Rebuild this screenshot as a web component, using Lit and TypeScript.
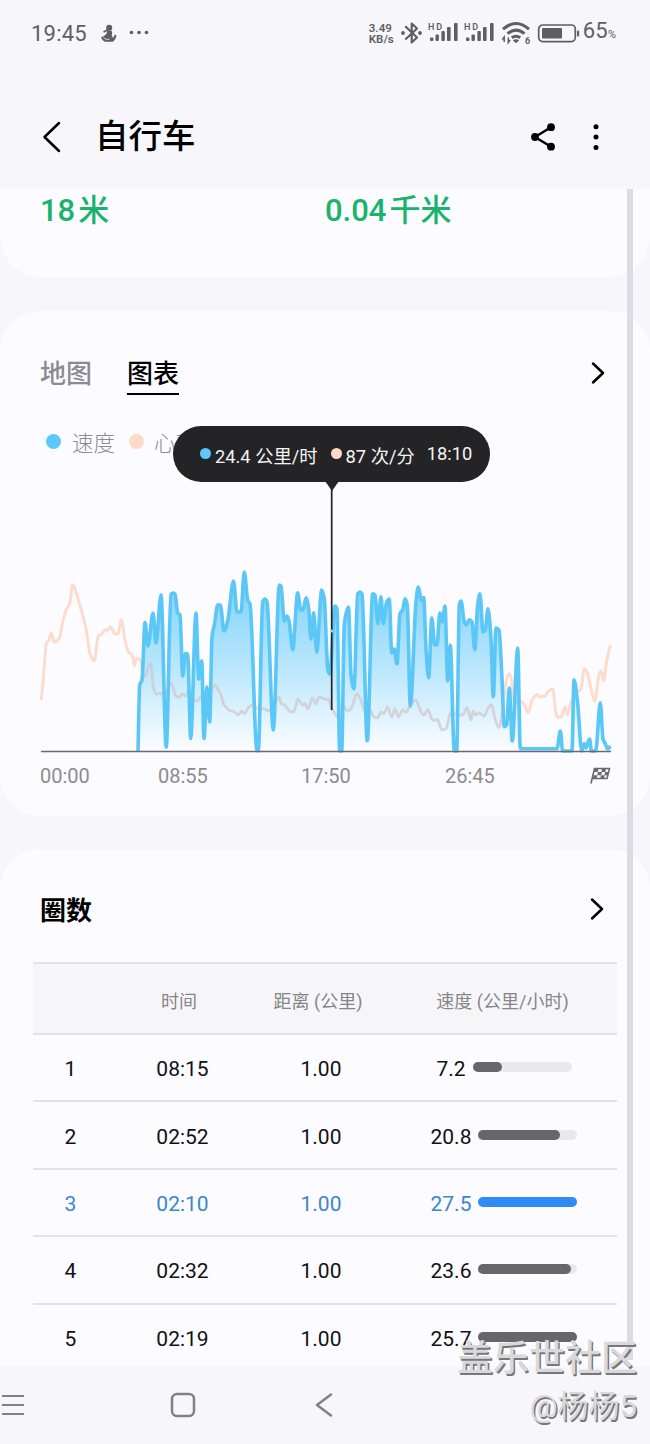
import { LitElement, html, css, svg } from "lit";
import { customElement, property } from "lit/decorators.js";
import { classMap } from "lit/directives/class-map.js";

type Pt = [number, number];

const parse = (s: string): Pt[] =>
  s.trim().split(/\s+/).map((p) => p.split(",").map(Number) as Pt);

const SPEED = parse(`137,749 138.7,683 141,678 144,620.5 147,644 152,611 155,641 160,593 165.2,745 170,592
172,591 174,592 176.7,611 179,613 181.7,674 184.3,651.5 186.7,652 189.7,736.5 195,611 197.7,677 200.7,659 203,736.5
206,685 208.7,720 211,635 213.5,622 216.7,603 219.3,603 223,629 226.7,619 232.5,579 236,610 240,610 243.3,570
246.7,598 249,602 256,748.7 257.3,748.7 261.7,600 264,597 266,600 272.3,728 278.3,583 280,584 283.3,619 286,614
288,619 291.7,647.7 296.7,590.7 299.7,608 302,608 305,595.7 307.7,607 310,637 312.7,610.7 315.7,650 320.7,588
323.3,597 326.7,667 328.7,672 334,604 336,607 338.7,749 340.7,749 343.3,622 347.5,605 350,673 353,687 356.7,592
359,590 361,592 366.3,738.7 371.7,591.7 374,593 377,621.7 380,594.7 382.3,621.7 385.7,600 388.3,597 390.7,651
393.3,647 396,662 399,611.7 401.7,608 404,596.7 406.3,603 409.3,704 415,600 417.3,585 420.3,598 422.7,595.5
425,647 427.7,675.7 430.8,616 433.7,643 436,643 438.9,610.7 441.3,620 444,604 446.7,679 449.3,643 453.3,749
455.7,749 458.3,603 460,599 463.3,620 465.3,623 468.3,617.7 471,620 473.7,647.7 476.7,603 479,591.7 482,630
484.3,628 487,606.7 490,637 492.3,694.7 495,626 498,628 500.7,670 503.3,724.7 505.7,723 508.3,686 511.3,739
516.7,646 519.3,746.7 556,746.7 559.3,729 561.7,749 571,749 573,677.7 576.7,702 580.7,749 583.3,741.7 585,746
586.7,741 588.7,737 590.3,749 594.7,749 599.3,700.7 602,737 604.3,741.7 606.7,747 609.3,744`);

const HEART = parse(`40.3,698 42.3,677 45.3,641.7 48,638 50.3,630.7 53.3,640 58.3,636 61.7,620 65.7,606.7
68.7,602 71.7,583 77.7,599 85,626.7 89.3,653 93.3,659 97.3,634 100.7,632 104,627.7 106.7,628 109.3,625 114.3,632
117.3,631.7 120,617.7 125,643 129,651.7 131,652 133.3,664 135.3,656.7 138.7,657 143.3,675 146.7,667 149.7,661.7
152.3,685 155,692 160,691 162,694 170.3,681.7 175,694 178,695 181.7,692 184,694 188,688 193,698 196.7,699 199,695
205,692 210,688 214,682.7 216.7,687 220,693 223,703 230,709 234,710 237,713 240.7,709 243,711.7 248,705 251.7,703
256.7,706.7 263.3,707 268,709 271.7,705 278.3,695 280,701.7 283.3,703 290,710 293.3,709 296.7,697 301.7,703
304,701.7 306.7,706.7 311.7,696 314.7,701.7 318.3,695 322.7,696.7 328,698 330.7,706.7 333,710 337,715 341.7,703
346.7,709 350.7,705.7 355.7,691.7 360,698 362.7,706.7 365,710 369,708 372.7,715 376.7,715.7 380,710 382.7,711.7
386.7,705 390.7,715 394,706.7 397.3,715 401.7,708 405,710 410,701.7 415,698 420,710 423,713 426.7,707.7 431.7,718
436.7,717.7 440.7,728 445,726.7 450,710 456.7,713 461.7,712.7 466,705.7 470,717.7 472,709 475,713 478,711
483.3,714 486.7,706.7 490.7,702.7 494,716.7 498,725.7 501.7,706.7 506,675 508.3,671.7 510.3,677 513,700 521,700
524,704 527,710.7 531.7,696.7 536.7,692.7 539,695 544,694 546.7,690 551.7,687 555,711.7 557,715.7 560.7,714
564,705 566.7,713 570,700 576.7,690 580,687 583.3,666.7 586,670 590,686.7 593.7,699 598,673 600,669 602.7,679
605,663 609.3,643`);

/** Monotone cubic path, so peaks stay rounded without overshooting. */
function smooth(p: Pt[]): string {
  const n = p.length;
  const d: number[] = [];
  for (let i = 0; i < n - 1; i++) d.push((p[i + 1][1] - p[i][1]) / (p[i + 1][0] - p[i][0]));
  const m: number[] = [d[0]];
  for (let i = 1; i < n - 1; i++) {
    m.push(d[i - 1] * d[i] <= 0 ? 0 : (2 * d[i - 1] * d[i]) / (d[i - 1] + d[i]));
  }
  m.push(d[n - 2]);
  let out = `M${p[0][0]},${p[0][1]}`;
  for (let i = 0; i < n - 1; i++) {
    const h = (p[i + 1][0] - p[i][0]) / 3;
    const c = [p[i][0] + h, p[i][1] + m[i] * h, p[i + 1][0] - h, p[i + 1][1] - m[i + 1] * h];
    out += `C${c.map((v) => v.toFixed(2)).join(",")},${p[i + 1][0]},${p[i + 1][1]}`;
  }
  return out;
}

const base = css`
  :host { display: block; box-sizing: border-box; font-family: Roboto, "Noto Sans CJK SC", sans-serif; }
  * { box-sizing: border-box; }
  svg { display: block; flex: none; }
`;

@customElement("status-bar")
class StatusBar extends LitElement {
  static styles = [base, css`
    :host { height: 66px; padding: 0 34px 0 31px; color: #5f5f63; }
    .bar { display: flex; align-items: center; height: 66px; }
    .time { font-size: 22px; width: 70px; letter-spacing: 0.2px; }
    .grow { flex: 1; }
    .rate { font-size: 11.5px; line-height: 11.5px; font-weight: 600; width: 31px; padding-top: 2px; white-space: nowrap; }
    .pct { font-size: 22px; margin-left: 3px; line-height: 30px; letter-spacing: 0.2px; }
    .pct small { font-size: 11px; letter-spacing: 0; }
    .hd { font: 600 9px Roboto, sans-serif; }
    .six { font: 700 9px Roboto, sans-serif; }
  `];
  signal() {
    return html`<svg width="36" height="24" viewBox="0 0 36 24" fill="#5f5f63">
      <text class="hd" x="0" y="9" textLength="14">HD</text>
      <rect x="2" y="16.5" width="3.4" height="3.5" rx="1"/><rect x="7.5" y="13.5" width="3.4" height="6.5" rx="1"/>
      <rect x="13.4" y="10" width="3.4" height="10" rx="1"/><rect x="19" y="6" width="3.6" height="14" rx="1"/>
      <rect x="26" y="2" width="3.6" height="18" rx="1"/>
    </svg>`;
  }
  render() {
    return html`<div class="bar">
      <span class="time">19:45</span>
      <svg width="16" height="19" viewBox="0 0 16 19" fill="#5f5f63">
        <circle cx="8.2" cy="3.8" r="3"/><path d="M2 7.6 6 5l1.4 1.4L3 8.8z"/>
        <path d="M6 6.5h4.2c1.8 2 .6 3.4.6 4.8.4 1 1 2 1.2 2.6 1-.6 1.2-1.8 1.8-3.4l1.6.8c-.2 3.4-1.8 5.2-3.6 6.4H4C1.600 16.800.2 14.800.2 12.800c1.800.2 2.400-.8 4-1.800C6 9.600 6.200 8 6 6.500z"/>
        <path d="M2.500 13.500c1.500 1.800 4 2.300 6 1.700" fill="none" stroke="#f6f6fb" stroke-width=".8"/>
      </svg>
      <svg width="36" height="10" viewBox="0 0 36 10" fill="#5f5f63">
        <circle cx="14.500" cy="4.500" r="1.800"/><circle cx="22" cy="4.500" r="1.800"/><circle cx="29.500" cy="4.500" r="1.800"/>
      </svg>
      <span class="grow"></span>
      <span class="rate">3.49<br>KB/s</span>
      <svg width="28" height="24" viewBox="0 0 28 24" fill="none" stroke="#5f5f63" stroke-width="2.200" stroke-linejoin="round">
        <path d="M5.300 5.200 17 16.500l-5.300 5V2.500l5.300 5L5.300 18.500"/>
        <circle cx="3" cy="12" r="1" stroke-width="1.800"/><circle cx="20" cy="12" r="1" stroke-width="1.800"/>
      </svg>
      ${this.signal()}${this.signal()}
      <svg width="32" height="24" viewBox="0 0 32 24" fill="none" stroke="#5f5f63" stroke-width="3">
        <path d="M3 8.200Q16 -3.200 29 8.200M7.500 12.700q8.500-7.200 17 0M11.800 16.800q4.200-3 8.400 0"/>
        <path d="M12.800 19.200q3.200-2 6.400 0L16 22.300z" fill="#5f5f63" stroke="none"/>
        <path d="M4.200 21v-5l-2 2.600M8.300 16.500v5l2-2.600" stroke-width="1.500"/>
        <text class="six" x="25" y="22.500" fill="#5f5f63" stroke="none">6</text>
      </svg>
      <svg width="48" height="20" viewBox="0 0 48 20">
        <rect x="6.700" y="2" width="36.600" height="16.600" rx="4" fill="none" stroke="#5f5f63" stroke-width="1.700"/>
        <rect x="10" y="5" width="20" height="10.600" rx="1" fill="#5f5f63"/>
        <rect x="45" y="7.500" width="2.200" height="6" rx="1" fill="#5f5f63"/>
      </svg>
      <span class="pct">65<small>%</small></span>
    </div>`;
  }
}

@customElement("title-bar")
class TitleBar extends LitElement {
  static styles = [base, css`
    :host { height: 123px; }
    .bar { display: flex; align-items: center; height: 141px; padding: 0 47px 0 42px; }
    h1 { flex: 1; margin: 0 0 0 33px; font-size: 33.5px; line-height: 44px; font-weight: 500; color: #000; }
    .more { margin-left: 33px; }
  `];
  render() {
    return html`<div class="bar">
      <svg width="20" height="32" viewBox="0 0 20 32"><path d="M17 2 2.500 16 17 30" fill="none" stroke="#000" stroke-width="2.500" stroke-linecap="round" stroke-linejoin="round"/></svg>
      <h1>自行车</h1>
      <svg width="26" height="30" viewBox="0 0 26 30"><path d="M21 5.200 5 15l16 9.700" fill="none" stroke="#000" stroke-width="2.500"/>
        <circle cx="21" cy="5.200" r="3.900"/><circle cx="5" cy="15" r="3.900"/><circle cx="21" cy="24.700" r="3.900"/></svg>
      <svg class="more" width="14" height="30" viewBox="0 0 14 30"><circle cx="7" cy="4.800" r="2.500"/><circle cx="7" cy="15" r="2.500"/><circle cx="7" cy="25.400" r="2.500"/></svg>
    </div>`;
  }
}

const chevron = html`<svg width="16" height="24" viewBox="0 0 16 24"><path d="M3 2.500 13 12 3 21.500" fill="none" stroke="#000" stroke-width="2.500" stroke-linecap="round" stroke-linejoin="round"/></svg>`;

@customElement("workout-chart")
class WorkoutChart extends LitElement {
  static styles = [base, css`
    :host { position: relative; }
    .legend { display: flex; align-items: center; height: 32px; padding-left: 6px; font-size: 21.5px; color: #8b8b90; font-weight: 300; }
    .dot { width: 15px; height: 15px; border-radius: 50%; margin-right: 11px; flex: none; }
    .dot.heart { margin-left: 14px; margin-right: 10px; }
    .speed { background: #5ac8fa; }
    .heart { background: #fdd9c8; }
    .plot { margin-top: 24px; }
    .axis { display: grid; grid-template-columns: 118px 143px 144px 1fr auto; align-items: center; height: 44px; font-size: 20px; color: #8b8b8f; }
    .tip { position: absolute; left: 133px; top: 0; width: 317px; height: 56px; border-radius: 28px; background: #242427; color: #f4f4f6; display: flex; align-items: center; padding: 2px 0 0 27px; font-size: 18.300px; white-space: nowrap; }
    .tip .dot { width: 11px; height: 11px; margin: -3px 4px 0 0; }
    .tip .second { margin-left: 13px; }
    .tip .when { margin: -2px 0 0 12px; }
    .pin { position: absolute; left: 285px; top: 55px; }
  `];
  render() {
    const line = smooth(SPEED);
    const heart = smooth(HEART);
    const area = `${line}V749H137Z`;
    return html`
      <div class="legend"><span class="dot speed"></span>速度<span class="dot heart"></span>心率</div>
      <svg class="plot" width="572" height="272" viewBox="39 480 572 272">
        ${svg`
        <defs>
          <linearGradient id="fade" gradientUnits="userSpaceOnUse" x1="0" y1="580" x2="0" y2="749">
            <stop offset="0" stop-color="#7fd3fb"/><stop offset=".5" stop-color="#b9e6fd"/><stop offset="1" stop-color="#fbfcff"/>
          </linearGradient>
          <clipPath id="under"><path d="${area}"/></clipPath>
        </defs>
        <path d="${heart}" fill="none" stroke="#fcdccd" stroke-width="3" stroke-linejoin="round"/>
        <path d="${area}" fill="url(#fade)"/>
        <path d="${heart}" fill="none" stroke="#cfc9cb" stroke-opacity=".75" stroke-width="2.800" clip-path="url(#under)"/>
        <path d="${line}" fill="none" stroke="#5bc7f6" stroke-width="3.600" stroke-linejoin="round"/>
        <path d="M40 749.500H610" stroke="#6a6a6e" stroke-width="1.400"/>`}
      </svg>
      <div class="axis">
        <span>00:00</span><span>08:55</span><span>17:50</span><span>26:45</span>
        <svg width="21" height="20" viewBox="0 0 21 20" fill="none" stroke="#6b6b6f">
          <path d="M1 17.500 4.500 2.500H19.500L17 12.500H3" stroke-width="1.600"/>
          <path d="M4.500 3h4l-.7 3h-4zM12 3h4l-.7 3h-4zM8 6h4l-.8 3.200h-4zM15.200 6h3.500l-.8 3.200h-3.500zM3.400 9.200h4l-.8 3.300H3zM11 9.200h3.800l-.8 3.300h-3.800z" fill="#6b6b6f" stroke="none"/>
        </svg>
      </div>
      <svg class="pin" width="14" height="230" viewBox="0 0 14 230"><path d="M0 0h14L7 10z" fill="#242427"/><path d="M6.700 5V229" stroke="#242427" stroke-width="1.700"/><circle cx="6.700" cy="150" r="1.500" fill="#8bdcff"/></svg>
      <div class="tip"><span class="dot speed"></span><span>24.4 公里/时</span><span class="dot heart second"></span><span>87 次/分</span><span class="when">18:10</span></div>
    `;
  }
}

interface Lap { n: number; time: string; dist: string; speed: string; fill: number; best?: boolean; }

@customElement("lap-table")
class LapTable extends LitElement {
  @property({ attribute: false }) laps: Lap[] = [];
  static styles = [base, css`
    .row { display: grid; grid-template-columns: 75px 149px 128px 1fr; align-items: center; justify-items: center; height: 67.400px; font-size: 21px; color: #111; border-bottom: 2px solid #e3e2e9; padding-top: 3px; }
    .head { height: 73px; border-top: 2px solid #e3e2e9; background: #f6f6f8; color: #85858a; font-size: 18px; }
    .row.best { color: #3a87cd; }
    .speed { display: flex; align-items: center; gap: 7px; padding-left: 6px; }
    .head .speed { padding-left: 3px; }
    .track { width: 99px; height: 10px; border-radius: 5px; background: #e9e9ed; margin-top: -4px; }
    .fill { height: 10px; border-radius: 5px; background: #66666b; }
    .best .fill { background: #2e8bf7; }
    .dist { padding-right: 0; }
    .head .dist { padding-right: 6px; }
    .head .time { padding-right: 7px; }
  `];
  render() {
    return html`
      <div class="row head"><span></span><span class="time">时间</span><span class="dist">距离 (公里)</span><span class="speed">速度 (公里/小时)</span></div>
      ${this.laps.map((l) => html`<div class=${classMap({ row: true, best: !!l.best })}>
        <span>${l.n}</span><span>${l.time}</span><span class="dist">${l.dist}</span>
        <span class="speed">${l.speed}<span class="track"><div class="fill" style="width:${l.fill}px"></div></span></span>
      </div>`)}`;
  }
}

@customElement("app-root")
class AppRoot extends LitElement {
  laps: Lap[] = [
    { n: 1, time: "08:15", dist: "1.00", speed: "7.2", fill: 29 },
    { n: 2, time: "02:52", dist: "1.00", speed: "20.8", fill: 82 },
    { n: 3, time: "02:10", dist: "1.00", speed: "27.5", fill: 99, best: true },
    { n: 4, time: "02:32", dist: "1.00", speed: "23.6", fill: 93 },
    { n: 5, time: "02:19", dist: "1.00", speed: "25.7", fill: 99 },
  ];
  static styles = [base, css`
    :host { position: relative; width: 650px; height: 1444px; overflow: hidden; background: #f6f6fb; }
    .content { height: 1177px; overflow: hidden; display: flex; flex-direction: column; gap: 33.500px; }
    .card { background: #fcfbff; border-radius: 40px; flex: none; }
    .totals { height: 88px; border-radius: 0 0 40px 40px; display: grid; grid-template-columns: 285px 1fr; padding: 0 0 0 40px; color: #19b36b; font-size: 31px; font-weight: 500; line-height: 43px; }
    .totals span { margin-left: 3px; }
    .graph { height: 505px; padding: 38px 39px 0 40px; }
    .tabs { display: flex; align-items: flex-start; height: 77px; }
    .tab { font-size: 26px; line-height: 46px; height: 46px; color: #8b8b8f; font-weight: 500; margin-right: 35px; padding-top: 2px; }
    .tab.on { color: #000; border-bottom: 2px solid #000; }
    .push { margin: 12px 5px 0 auto; }
    .lap-card { height: 560px; padding: 0 33px; }
    .lap-head { display: flex; align-items: center; justify-content: space-between; height: 113px; padding: 6px 12px 0 7px; }
    h2 { margin: 0; font-size: 26px; font-weight: 600; line-height: 40px; color: #000; padding-top: 4px; }
    .scroll { position: absolute; left: 627px; top: 189px; width: 6px; height: 1171px; background: #dddce2; }
    .nav { height: 78px; display: grid; grid-template-columns: 170px 142px 142px; align-items: center; }
    .mark { position: absolute; right: 13px; bottom: 13px; text-align: right; color: #d9d9dc; text-shadow: 1.500px 1.500px 0 #77777a; white-space: nowrap; }
    .mark .club { font-size: 36px; line-height: 48px; font-weight: 500; }
    .mark .user { font-size: 31px; line-height: 48px; font-weight: 400; }
  `];
  render() {
    return html`
      <status-bar></status-bar>
      <title-bar></title-bar>
      <main class="content">
        <section class="card totals"><div>18<span>米</span></div><div>0.04<span>千米</span></div></section>
        <section class="card graph">
          <div class="tabs"><div class="tab">地图</div><div class="tab on">图表</div><div class="push">${chevron}</div></div>
          <workout-chart></workout-chart>
        </section>
        <section class="card lap-card">
          <div class="lap-head"><h2>圈数</h2>${chevron}</div>
          <lap-table .laps=${this.laps}></lap-table>
        </section>
      </main>
      <nav class="nav">
        <svg width="26" height="26" viewBox="0 0 26 26"><path d="M2 4h22M2 13h22M2 22h22" stroke="#808085" stroke-width="2.200"/></svg>
        <svg width="26" height="26" viewBox="0 0 26 26"><rect x="2" y="2" width="22" height="22" rx="5" fill="none" stroke="#808085" stroke-width="2.500"/></svg>
        <svg width="26" height="26" viewBox="0 0 26 26"><path d="M19 2.500 5 13l14 10.500" fill="none" stroke="#808085" stroke-width="2.500" stroke-linecap="round" stroke-linejoin="round"/></svg>
      </nav>
      <div class="scroll"></div>
      <div class="mark"><div class="club">盖乐世社区</div><div class="user">@杨杨5</div></div>
    `;
  }
}
